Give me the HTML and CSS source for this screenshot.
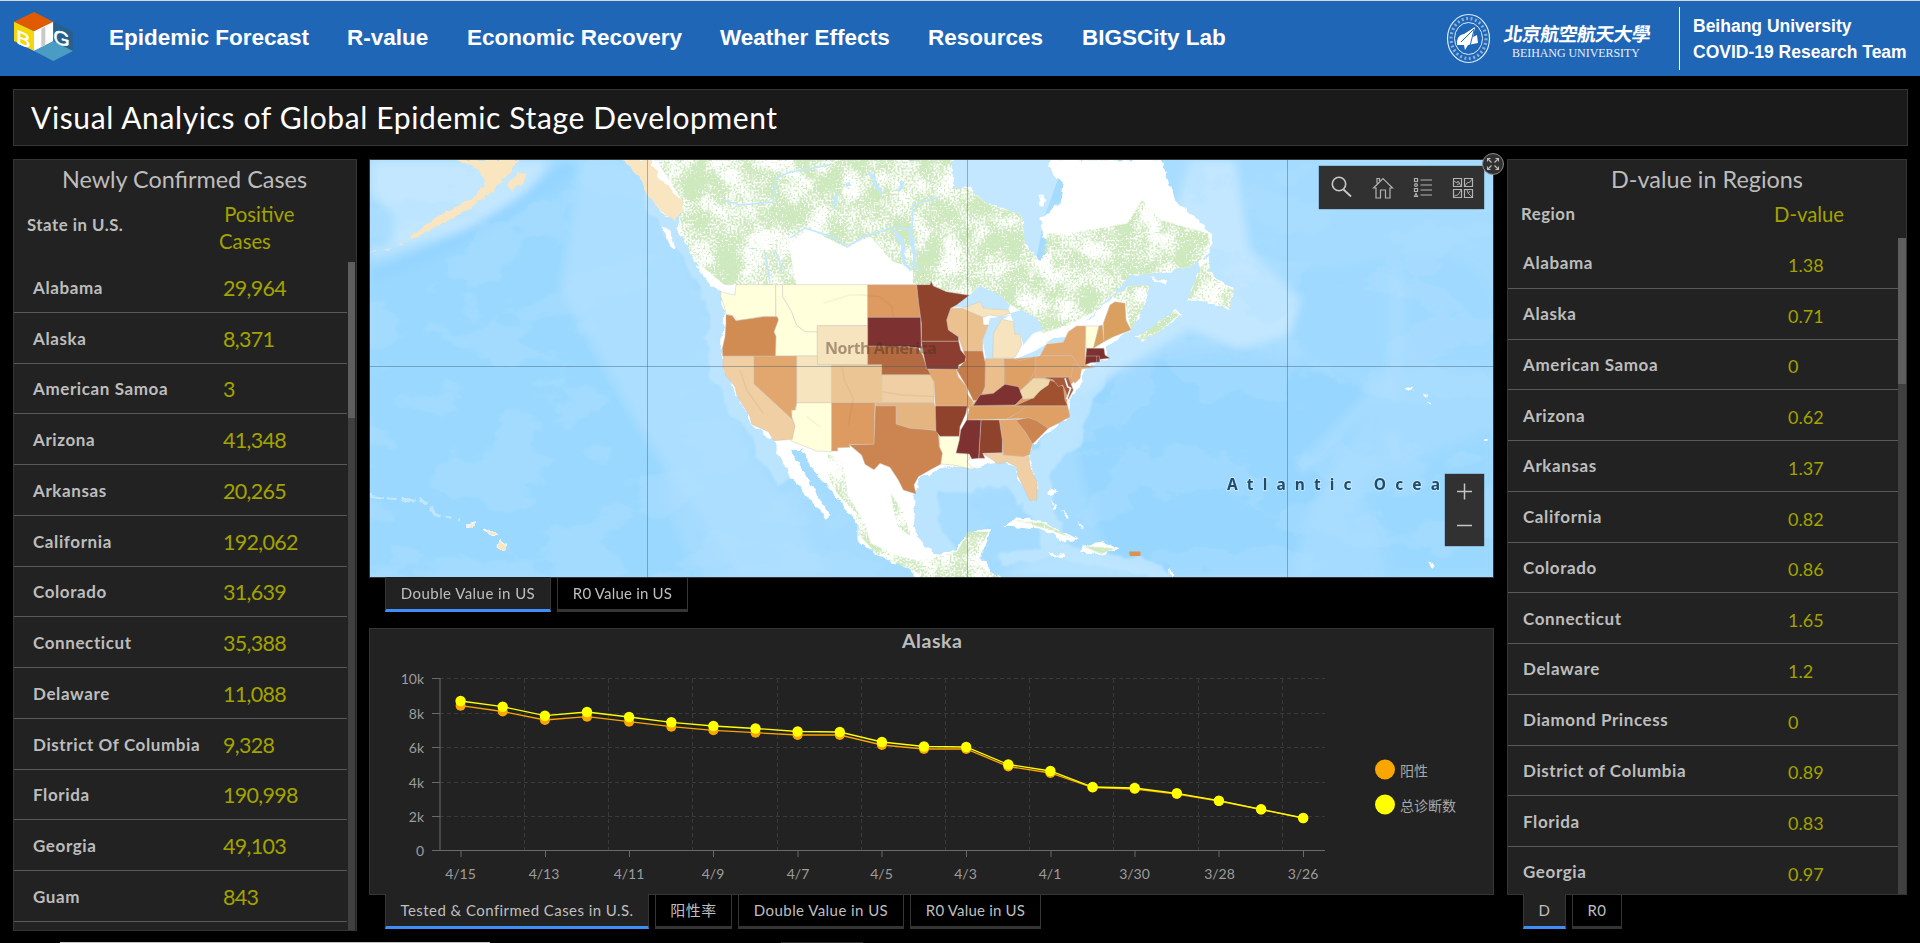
FILE: index.html
```html
<!DOCTYPE html>
<html lang="en">
<head>
<meta charset="utf-8">
<title>Visual Analyics of Global Epidemic Stage Development</title>
<link rel="stylesheet" href="styles.css">
</head>
<body>
<header class="topbar">
  <svg class="logo" viewBox="39 33 183 153" width="61" height="51">
    <path d="M42 65L102 36L160 65L102 94Z" fill="#e25a00"/>
    <path d="M42 65L102 94V153L42 123Z" fill="#f3d60c"/>
    <path d="M102 94L160 65V124L102 153Z" fill="#fff"/>
    <path d="M160 65L219 94V153L160 124Z" fill="#25608f"/>
    <path d="M102 153L160 124L219 153L160 183Z" fill="#4a9cc2"/>
    <path d="M124 86L136 80V134L124 140Z" fill="#c9c9c9"/>
    <text class="cube-letter" transform="matrix(1.1 .45 0 1 49 129)">B</text>
    <text class="cube-letter" transform="matrix(1.1 .3 0 1 160 128)">G</text>
  </svg>
  <nav class="nav">
    <a class="n1">Epidemic Forecast</a><a class="n2">R-value</a><a class="n3">Economic Recovery</a><a class="n4">Weather Effects</a><a class="n5">Resources</a><a class="n6">BIGSCity Lab</a>
  </nav>
  <svg class="university" viewBox="1440 4 230 68" width="230" height="68">
    <g fill="none" stroke="#dcebfa">
      <ellipse cx="1468.500" cy="38.500" rx="21" ry="24" stroke-width="1.200"/>
      <ellipse cx="1468.500" cy="38.500" rx="14" ry="16" stroke-width="1"/>
      <ellipse cx="1468.500" cy="38.500" rx="17.500" ry="20" stroke-width="3.200" stroke-dasharray="2 2.500" opacity=".55"/>
    </g>
    <path d="M1457 41q1-6 7-7l11-7-2 10 4-2 1 8-5 1-5 1-3 5-1-5-7 0Z" fill="#fff"/>
    <path d="M1461 42l13-13M1469 50l5-20" stroke="#1f66b6" stroke-width="1"/>
    <text class="brush" transform="translate(1503 41) skewX(-8)" x="0" y="0" textLength="147">北京航空航天大學</text>
    <text class="roman" x="1512" y="56.500" textLength="128">BEIHANG UNIVERSITY</text>
  </svg>
  <div class="team"><span class="t1">Beihang University</span><span class="t2">COVID-19 Research Team</span></div>
</header>
<section class="banner"><h1>Visual Analyics of Global Epidemic Stage Development</h1></section>
<main class="dash">
  <section class="panel cases">
    <h2>Newly Confirmed Cases</h2>
    <div class="head"><b>State in U.S.</b><span>&nbsp;Positive<br>Cases</span></div>
    <div class="scroll">
      <ul class="rows">
        <li><b>Alabama</b><i>29,964</i></li>
        <li><b>Alaska</b><i>8,371</i></li>
        <li><b>American Samoa</b><i>3</i></li>
        <li><b>Arizona</b><i>41,348</i></li>
        <li><b>Arkansas</b><i>20,265</i></li>
        <li><b>California</b><i>192,062</i></li>
        <li><b>Colorado</b><i>31,639</i></li>
        <li><b>Connecticut</b><i>35,388</i></li>
        <li><b>Delaware</b><i>11,088</i></li>
        <li><b>District Of Columbia</b><i>9,328</i></li>
        <li><b>Florida</b><i>190,998</i></li>
        <li><b>Georgia</b><i>49,103</i></li>
        <li><b>Guam</b><i>843</i></li>
      </ul>
      <div class="track"><div class="thumb"></div></div>
    </div>
  </section>

  <div class="center">
    <section class="map">
      <svg class="mapart" viewBox="370 160 1123 417" width="1123" height="417" preserveAspectRatio="none">
        <defs>
          <filter id="speck" x="0" y="0" width="100%" height="100%">
            <feTurbulence type="fractalNoise" baseFrequency=".5" numOctaves="2" seed="4" result="fine"/>
            <feTurbulence type="fractalNoise" baseFrequency=".035" numOctaves="3" seed="9" result="broad"/>
            <feComposite in="fine" in2="broad" operator="arithmetic" k2=".6" k3=".6"/>
            <feColorMatrix values="0 0 0 0 0 0 0 0 0 0 0 0 0 0 0 8 0 0 0 -3.350" result="n"/>
            <feComposite in="SourceGraphic" in2="n" operator="in"/>
          </filter>
          <filter id="depth" x="0" y="0" width="100%" height="100%">
            <feTurbulence type="fractalNoise" baseFrequency=".013 .02" numOctaves="5" seed="11"/>
            <feColorMatrix values="0 0 0 0 0 0 0 0 0 0 0 0 0 0 0 14 0 0 0 -7.3" result="n"/>
            <feComposite in="SourceGraphic" in2="n" operator="in"/>
          </filter>
          <filter id="rough" x="-5%" y="-5%" width="110%" height="110%">
            <feTurbulence type="fractalNoise" baseFrequency=".12" numOctaves="2" seed="2"/>
            <feDisplacementMap in="SourceGraphic" scale="7" xChannelSelector="R" yChannelSelector="G"/>
          </filter>
          <filter id="soft"><feGaussianBlur stdDeviation="5"/></filter>
          <filter id="edge" x="-5%" y="-5%" width="110%" height="110%">
            <feTurbulence type="fractalNoise" baseFrequency=".04" numOctaves="3" seed="5" result="t"/>
            <feDisplacementMap in="SourceGraphic" in2="t" scale="18" xChannelSelector="R" yChannelSelector="G"/>
            <feGaussianBlur stdDeviation="1.200"/>
          </filter>
        </defs>
        <rect x="370" y="160" width="1123" height="417" fill="#a4dbff"/>
        <g filter="url(#soft)">
          <path d="M370 275Q470 240 560 165L600 160Q570 220 580 260Q620 330 640 370Q700 400 680 440Q640 480 700 577H370Z" fill="#9ad8ff"/>
          <path d="M580 160H650L690 270L725 350L740 430L800 520L830 577H740L640 430L560 290Z" fill="#abdeff"/>
          <path d="M370 160H550Q520 210 480 225Q430 240 370 258Z" fill="#c3e7ff"/>
          <path d="M370 195L395 215L390 245L370 250Z" fill="#a4dbff"/>
          <path d="M370 275Q470 245 570 165" stroke="#92d3ff" stroke-width="9" fill="none"/>
          <path d="M1070 400Q1130 350 1240 350Q1350 370 1380 400Q1320 460 1290 577H1120Q1080 500 1070 400Z" fill="#97d6ff"/>
          <path d="M1290 270Q1340 270 1390 260Q1470 240 1493 300V370Q1420 350 1400 380Q1300 370 1290 330Z" fill="#9fd9ff"/>
          <path d="M1190 160H1235L1250 250L1300 300L1290 335L1240 350L1190 330Q1120 370 1075 400L1080 330L1150 290Z" fill="#c3e7ff"/>
          <path d="M1390 400Q1400 350 1395 260M1300 470Q1340 430 1400 370M1390 430L1405 490" stroke="#b0e0ff" stroke-width="14" fill="none" opacity=".6"/>
          <path d="M1360 480L1493 430V577H1390Z" fill="#9bd8ff"/>
          <path d="M1000 577Q1060 530 1180 580Z" fill="#b5e2ff"/>
        </g>
        <rect x="370" y="160" width="1123" height="417" fill="#b5e2ff" opacity=".32" filter="url(#depth)"/>

        <g filter="url(#edge)" fill="none" stroke="#c3e7ff" stroke-width="28" stroke-linejoin="round" opacity=".75">
          <path d="M655 190L700 260L722 310L722 370L765 440L790 480"/>
          <path d="M1110 340L1085 380L1065 440L1035 465L1040 505L1055 545M1030 500L1015 475L975 472L925 480L922 535L950 565"/>
          <path d="M1000 560L1060 550L1170 575" stroke-width="12"/>
        </g>
        <path d="M940 160H1065L1045 215L1035 265L1022 235L985 215L950 195Z" fill="#c3e7ff"/>
        <path d="M1110 350L1090 330L1100 300L1130 260L1200 250V320L1130 345Z" fill="#c3e7ff"/>

        <g filter="url(#rough)" fill="#fff">
          <path transform="translate(360 150) scale(.3699 .3333)" d="M715 28L755 80L790 150L830 205L870 180L860 240L905 330L945 390L975 430L985 500L978 590L985 660L1020 740L1055 820L1120 872L1130 905L1165 985L1215 1045L1260 1108L1272 1098L1240 1040L1205 975L1165 900L1195 900L1225 960L1290 1040L1345 1120L1345 1170L1400 1215L1500 1265L1568 1290H1700V1230L1590 1225L1525 1190L1495 1130L1500 1030L1510 985L1600 945V28Z"/>
          <path transform="translate(920 150) scale(.3699 .3333)" d="M-20 28H75L85 120L130 115L180 160L275 195L285 290L325 330L345 300L325 205L380 160L385 100L345 50L355 28H650L690 150L755 210L790 260L785 310L730 350L640 370L570 375L540 410L480 480L430 540L520 440L570 405L620 405L600 480L570 540L500 595L510 625L445 655L435 700L410 740L400 800L345 850L300 890L295 930L320 1010L310 1055L270 1000L260 950L220 935L140 955L50 945L-20 975ZM585 560L620 540L690 480L710 495L640 550L600 575ZM760 330L780 320L785 370L845 420L840 480L790 460L720 450L745 390ZM-20 1190L50 1215L100 1200L130 1145L190 1140L160 1230L180 1265L250 1290H-20ZM225 1130L260 1105L330 1115L430 1170L380 1175L340 1140L240 1130ZM440 1185L490 1175L540 1195L490 1215L430 1210ZM350 1213L385 1210L390 1220L360 1222ZM620 378L670 395L660 402L625 388ZM320 130L345 150L330 170Z"/>
          <path transform="translate(360 150) scale(.3699 .3333)" d="M815 230L835 235L855 300L840 290ZM905 345L940 360L985 420L950 405Z"/>
          <path d="M1046 492l10-4 2 4-8 2ZM1052 500l4 8-3 1ZM1062 510l8 8-3 1ZM1078 522l6 5-2 1ZM1170 566l4 10h-3ZM1406 387l8 1-2 3-5-1ZM1424 394l5 1-1 3ZM1426 403l4 1-1 2ZM1427 562l8 3-3 3ZM1484 438l6 2-4 2Z"/>
        </g>

        <g filter="url(#speck)" fill="#cfe9bf">
          <path transform="translate(360 150) scale(.3699 .3333)" d="M800 28H1600V405H1525L1490 350L1440 335L1380 260L1310 290L1210 235L1160 290L1180 405H985L905 330L860 240L870 150Z"/>
          <path transform="translate(920 150) scale(.3699 .3333)" d="M-20 80L130 115L180 160L275 195L285 290L325 330L345 250L400 250L560 220L600 150L650 210L780 250L785 310L730 350L640 370L570 375L540 410L480 480L400 525L330 550L290 495L180 420L130 437L-20 400ZM520 440L570 405L620 405L600 480L570 540L555 460ZM590 560L690 480L700 495L640 550L600 575ZM760 350L780 330L785 370L845 420L840 475L790 460L725 445ZM0 1230L100 1205L130 1145L185 1145L150 1230L180 1265L250 1285H0ZM250 1110L330 1118L420 1168L340 1135ZM440 1188L530 1195L490 1212Z"/>
          <path transform="translate(360 150) scale(.3699 .3333)" d="M1265 910L1305 940L1320 1040L1365 1120L1380 1180L1460 1220L1540 1240L1600 1260L1520 1275L1400 1215L1345 1150L1340 1090L1290 1030L1265 980ZM1435 1030L1470 1090L1490 1160L1450 1130Z"/>
        </g>
        <g fill="none" stroke="#c3e7ff" stroke-width="1.500" stroke-linejoin="round">
          <path d="M723 200L740 205L760 203L773 202L776 178L790 172L830 165M790 238L805 228L835 238L847 247L865 236L895 227L912 230L913 205L940 197"/>
          <path d="M765 252L770 283M775 250L783 270"/>
          <path d="M893 230l8 10 4 25 5 5M910 228l6 42M870 172l5 10 6 12M838 195l-5 12M850 183l-5 3M903 183l-6 8" stroke-width="4" filter="url(#rough)"/>
        </g>

        <g filter="url(#rough)" fill="#fae5c1">
          <path d="M456 160H518L508 175L490 193L475 206L455 216L440 224L428 230L416 237L405 241L420 230L432 220L450 210L470 199L485 185L480 170ZM507 184L518 173L527 174L522 184L512 191ZM398 243l6-1-3 2ZM383 250l8-2-5 3ZM371 251l6-1-4 2Z"/>
          <path d="M624 160H650L658 176L682 200L682 212L675 220L668 218L650 198L640 178Z"/>
          <path stroke="#fff" stroke-width=".8" d="M500 539l8 6-5 6-5-3ZM484 528l12 6-4 3ZM466 525l9-2-2 4Z"/>
        </g>
        <path d="M370 495Q400 500 415 500T435 515L460 520" fill="none" stroke="#c3e7ff" stroke-width="3" stroke-dasharray="14 4 8 6" filter="url(#rough)"/>

        <g class="states" transform="translate(700 270) scale(.33333)">
          <g fill="#c3e7ff">
            <path d="M752 112L808 76L840 48L900 75L930 105L925 120L850 115L842 95L800 112Z"/>
            <path d="M848 210L865 165L870 145L930 135L905 150L882 190L880 265L858 268Z"/>
            <path d="M930 130L965 120L1010 145L1030 180L1000 190L970 225L960 190L945 195L940 155Z"/>
            <path d="M945 268L1000 245L1035 225L1045 232L1010 262L965 272ZM1035 220L1060 205L1097 200L1092 217Z"/>
          </g>
          <path fill="#dfa066" d="M856 268L940 266L1005 262L1115 262L1138 320L1105 350L1100 407L985 412L808 412L838 380Z"/>
          <g fill="#ffffdb">
            <path d="M62 62L70 68L105 75L108 44H227V139L190 139L140 148L115 152L100 137L78 132L72 105L62 80Z"/>
            <path d="M227 44H248V80L275 125L290 165L315 185H352V258H226L228 200L222 185L235 150L228 139Z"/>
            <path d="M248 44H503V167H352V185H315L290 165L275 125L248 80Z"/>
            <path d="M290 398H395V545L350 543L272 512L285 468L274 440L276 420H288Z"/>
            <path d="M718 499H778L782 520L770 550L808 552V566L800 575L822 598L790 592L760 585L722 582L727 550L718 530Z"/>
            <path d="M1157 168H1197L1190 200L1180 235H1158Z"/>
          </g>
          <g fill="#f6e4bf">
            <path d="M352 167H503V284H352Z"/><path d="M290 258H352V284H395V398H290Z"/>
            <path d="M878 265L880 190L905 148L940 155L945 195L960 190L965 225L945 262ZM770 118L800 110L842 95L850 115L925 120L930 130L900 140L870 135L850 142Z"/>
          </g>
          <g fill="#efcfa3">
            <path d="M70 258H162V342L278 447L285 468L277 508L222 512L205 485L155 463L150 440L110 375L105 350L78 318L68 290Z"/>
            <path d="M545 314H692L702 335V398H545Z"/>
            <path fill="#ecc594" d="M395 284H545V398H395Z"/>
            <path d="M850 552L907 550L975 560L986 558L990 590L1012 640L1010 690L990 692L955 620L950 590L920 575L895 582L870 565Z"/>
            <path fill="#ebc190" d="M752 115L785 115L848 142L850 165L865 165L848 210V243H790L775 200L745 180L740 150Z"/>
            <path fill="#eabf8d" d="M856 266H912V345L880 370L845 372L855 340Z"/>
          </g>
          <g fill="#e2a76e">
            <path d="M162 258H290V398L285 420H274L276 447L162 342Z"/>
            <path fill="#e5b581" d="M526 398H702L708 425V481L670 478L630 475L588 462V408H526Z"/>
            <path d="M680 298L768 296L775 320L800 350L802 372L820 395L810 420L798 408H706L702 335Z"/>
            <path d="M898 450L950 448L975 485L998 520L988 555L970 560L910 555L907 510Z"/>
            <path d="M1005 262L1020 257H1115L1140 285L1120 320L1005 322Z"/>
            <path d="M1020 257L1040 222L1090 217L1105 185L1130 168H1157L1155 285L1183 292L1145 297L1115 257Z"/>
            <path d="M1122 280L1145 295L1140 325L1125 340L1112 320Z"/>
            <path fill="#dd9f62" d="M810 408H985L955 430L920 447L800 450Z"/>
            <path fill="#dfa066" d="M980 408H1103L1110 440L1075 460L1045 475L1010 455L985 445L920 447L955 428Z"/>
            <path fill="#dfa066" d="M912 266H940L960 272L1005 260V300L985 340L960 362L915 343Z"/>
            <path fill="#d9a060" d="M1197 168L1207 165L1212 215L1180 235ZM1210 160L1230 105L1245 95L1275 100L1278 150L1293 180L1240 200L1212 215Z"/>
            <path fill="#dd9a61" d="M503 44H650L656 80L662 142H503Z"/>
            <path fill="#dd9a61" d="M395 398H525L522 523H448L450 532L413 533V543H395Z"/>
          </g>
          <g fill="#cc8550">
            <path fill="#d18c53" d="M78 134L97 137L108 152L160 145L190 140H232L235 150L222 185L228 200L226 258H68L67 235L75 200L78 160Z"/>
            <path d="M526 408H588V462L630 475L670 478L715 482L718 530L727 550L722 583L690 600L655 620L642 645L648 672L610 660L595 630L570 592L540 580L522 599L495 583L485 555L448 524L522 523Z"/>
            <path d="M948 450L985 443L1010 452L1045 475L1020 500L998 522L975 485Z"/>
            <path fill="#c57c4b" d="M790 243H848L856 280L855 350L838 390L820 392L800 350L770 300L798 270Z"/>
            <path fill="#b56b42" d="M503 228H600L655 235L668 255L680 290L692 314H545V284H503Z"/>
          </g>
          <g fill="#8f432d">
            <path d="M650 44H690L693 33L700 48L740 65L808 76L770 105L752 115L740 150L745 180L775 200L776 214H664V160L656 100Z"/>
            <path fill="#8b3d31" d="M664 214H776L782 240L798 260L795 275L776 285L775 298L680 297L672 260Z"/>
            <path d="M706 408H802L798 430L780 470L778 499H720L708 484Z"/>
            <path d="M843 450H898L907 510V548L848 550L855 565H836Z"/>
            <path fill="#a05130" d="M945 407L990 388L1020 362L1045 330L1065 335L1090 350L1095 390L1103 407Z"/>
            <path fill="#a9593a" d="M1030 322H1105L1120 360L1105 388L1095 360L1088 345L1075 350L1060 330Z"/>
          </g>
          <g fill="#7e3131">
            <path d="M503 142H662L664 235L625 230L503 228Z"/>
            <path d="M800 450H843L836 565L815 567L808 552L768 549L778 510L782 480Z"/>
            <path d="M820 407L840 375L880 370L915 343L955 350L970 380L945 405Z"/>
            <path d="M1160 235H1212L1215 255L1230 265L1200 268V276L1172 278L1155 285Z"/>
          </g>
          <path fill="#efd9ab" d="M960 362L985 340L1000 325L1030 325L1050 330L1045 345L1020 362L1000 385L970 388Z"/>
          <path class="border" d="M1155 258H1198V276M1190 258V278"/>
          <path class="bay" d="M1095 325L1103 350L1112 355L1100 388"/>
          <path class="river" d="M425 290l10 45 25 50-15 80M480 75l60 5 35 30 10 60 40 60M120 300l20 60 50 70M370 100l80-25 50 0M545 365l60 10 100 5M320 440l40 30"/>
        </g>
        <path d="M1129 551.500h11.500v4.500h-10.500Z" fill="#da9152"/>
        <text class="continent" x="825" y="354" textLength="112">North America</text>
        <text class="ocean" x="1227" y="490" textLength="213">Atlantic Ocea</text>
        <path d="M647.500 160V577M967.500 160V577M1287.500 160V577M370 366.500H1493" stroke="#335566" stroke-opacity=".4" stroke-width="1" fill="none"/>
      </svg>
      <div class="tools">
        <svg viewBox="1319 166 165 43" width="165" height="43" fill="none" stroke="#c9c9c9">
          <circle cx="1339" cy="184" r="6.700" stroke-width="1.600"/><path d="M1343.500 189.500l7.500 7" stroke-width="1.800"/>
          <g stroke="#b4b4b4" stroke-width="1.200"><path d="M1373.500 188l9.500-9.500 9.500 9.500h-2.500v10h-4.500v-8h-5v8h-4.500v-10ZM1377 183.500v-5h2.500v2.500"/>
          <path d="M1420.500 180h11.500M1420.500 185h11.500M1420.500 190h11.500M1420.500 195h11.500"/>
          <path d="M1414.500 178.500h3v3h-3ZM1414.500 188.500h3v3h-3ZM1416 193.500l1.500 3h-3Z"/><circle cx="1416" cy="185" r="1.400"/>
          <path d="M1453.500 178.500h8v8h-8ZM1464.500 178.500h8v8h-8ZM1453.500 189.500h8v8h-8ZM1464.500 189.500h8v8h-8Z"/>
          <path stroke-width=".9" d="M1454 181l3 2 1-2 3 5M1457 185l3-2M1465 186l2-3 3-1 2-3M1454 196l4-1 3-5M1467 190l1 3 4 4M1470 191l-2 3"/></g>
        </svg>
      </div>
      <div class="zoomer"><svg viewBox="0 0 39 72" width="39" height="72"><path d="M12 17.500h15M19.500 9.500v16M12 51.500h15" stroke="#c4c4c4" stroke-width="1.500"/></svg></div>
      <div class="expand"><svg viewBox="0 0 24 24" width="24" height="24" fill="none"><circle cx="12" cy="12" r="10.500" fill="#303030" stroke="#8a8a8a"/><path d="M6.500 9.500v-3h3M6.500 6.500l4 4M17.500 9.500v-3h-3M17.500 6.500l-4 4M6.500 14.500v3h3M6.500 17.500l4-4M17.500 14.500v3h-3M17.500 17.500l-4-4" stroke="#bbb" stroke-width="1.100"/></svg></div>
    </section>
    <div class="tabs"><span class="tab on w166">Double Value in US</span><span class="tab w131">R0 Value in US</span></div>
    <section class="chartbox">
      <svg class="chart" viewBox="370 629 1123 265" width="1123" height="265">
        <text class="ctitle" x="932" y="647.500" text-anchor="middle" textLength="60">Alaska</text>
        <path class="grid" d="M440 678.500H1325M440 713.500H1325M440 747.500H1325M440 782.500H1325M440 816.500H1325M524.500 679V850M608.500 679V850M692.500 679V850M777.500 679V850M861.500 679V850M945.500 679V850M1029.500 679V850M1113.500 679V850M1198.500 679V850M1282.500 679V850"/>
        <path class="axis" d="M440 678V851M432 678.500h8M432 713.500h8M432 747.500h8M432 782.500h8M432 816.500h8M432 850.500H1325M461 851v6M545.500 851v6M629.500 851v6M713.500 851v6M798 851v6M882 851v6M966.500 851v6M1051 851v6M1135 851v6M1219 851v6M1303.500 851v6"/>
        <g class="lab" text-anchor="end"><text x="424" y="684">10k</text><text x="424" y="719">8k</text><text x="424" y="753">6k</text><text x="424" y="788">4k</text><text x="424" y="822">2k</text><text x="424" y="856">0</text></g>
        <g class="lab" text-anchor="middle"><text x="460.500" y="879">4/15</text><text x="544" y="879">4/13</text><text x="629" y="879">4/11</text><text x="713" y="879">4/9</text><text x="798" y="879">4/7</text><text x="881.500" y="879">4/5</text><text x="965.500" y="879">4/3</text><text x="1050" y="879">4/1</text><text x="1134.500" y="879">3/30</text><text x="1219.500" y="879">3/28</text><text x="1303" y="879">3/26</text></g>
        <defs>
          <marker id="om" markerUnits="userSpaceOnUse" markerWidth="12" markerHeight="12" refX="6" refY="6"><circle cx="6" cy="6" r="5" fill="#faa600"/></marker>
          <marker id="ym" markerUnits="userSpaceOnUse" markerWidth="12" markerHeight="12" refX="6" refY="6"><circle cx="6" cy="6" r="5.200" fill="#ff0"/></marker>
        </defs>
        <polyline class="series pos" points="460.600,705.700 502.700,711.500 544.900,720 587,716.700 629.100,721.700 671.300,726.700 713.400,730.300 755.500,732.700 797.600,735 839.800,735 881.900,745 924,749 966.200,749 1008.300,766.500 1050.400,773 1092.600,787.500 1134.700,789 1176.800,794 1218.900,801 1261.100,809.500 1303.200,818.200"/>
        <polyline class="series tot" points="460.600,701 502.700,706.700 544.900,715.700 587,712 629.100,717 671.300,722.300 713.400,726 755.500,728.500 797.600,731.500 839.800,732 881.900,742 924,746.500 966.200,747 1008.300,764.500 1050.400,771 1092.600,787 1134.700,788 1176.800,793.300 1218.900,800.700 1261.100,809.300 1303.200,818"/>
        <circle cx="1385" cy="769.500" r="10" fill="#faa600"/><circle cx="1385" cy="804.500" r="10" fill="#ff0"/>
        <text class="leg" x="1400" y="776" textLength="28">阳性</text><text class="leg" x="1400" y="811" textLength="56">总诊断数</text>
      </svg>
    </section>
    <div class="tabs"><span class="tab on w264">Tested &amp; Confirmed Cases in U.S.</span><span class="tab w77">阳性率</span><span class="tab w166">Double Value in US</span><span class="tab w131">R0 Value in US</span></div>
  </div>

  <div class="right">
    <section class="panel dvals">
      <h2>D-value in Regions</h2>
      <div class="head"><b>Region</b><span>D-value</span></div>
      <div class="scroll">
        <ul class="rows">
          <li><b>Alabama</b><i>1.38</i></li>
          <li><b>Alaska</b><i>0.71</i></li>
          <li><b>American Samoa</b><i>0</i></li>
          <li><b>Arizona</b><i>0.62</i></li>
          <li><b>Arkansas</b><i>1.37</i></li>
          <li><b>California</b><i>0.82</i></li>
          <li><b>Colorado</b><i>0.86</i></li>
          <li><b>Connecticut</b><i>1.65</i></li>
          <li><b>Delaware</b><i>1.2</i></li>
          <li><b>Diamond Princess</b><i>0</i></li>
          <li><b>District of Columbia</b><i>0.89</i></li>
          <li><b>Florida</b><i>0.83</i></li>
          <li><b>Georgia</b><i>0.97</i></li>
        </ul>
        <div class="track"><div class="thumb"></div></div>
      </div>
    </section>
    <div class="tabs"><span class="tab on w43">D</span><span class="tab w50">R0</span></div>
  </div>
</main>
<footer class="edge"><i class="e1"></i><i class="e2"></i></footer>
</body>
</html>
```

FILE: styles.css
```css
* { box-sizing: border-box; }
html, body { margin: 0; height: 943px; overflow: hidden; background: #000; }
body { display: flex; flex-direction: column; font-family: Lato, "Noto Sans CJK SC", sans-serif; color: #bdbdbd; }
h1, h2, ul { margin: 0; padding: 0; font-weight: 400; list-style: none; }

.topbar { flex: none; height: 76px; display: flex; align-items: flex-start; background: #1f66b6; border-top: 1px solid #d5d9de; color: #fff; font-family: "Liberation Sans", Arial, sans-serif; font-weight: 700; }
.logo { margin: 10px 0 0 13px; }
.cube-letter { font: 400 58px "Liberation Sans", sans-serif; fill: #fff; stroke: #fff; stroke-width: 1.5px; }
.nav { margin: 23px 0 0 35px; display: flex; width: 1332px; font-size: 22.5px; line-height: 28px; white-space: nowrap; }
.nav a { display: block; }
.n1 { width: 238px; } .n2 { width: 120px; } .n3 { width: 253px; } .n4 { width: 208px; } .n5 { width: 154px; }
.university { flex: none; margin-top: 3px; margin-left: -1px; }
.brush { font: 700 19px "Noto Sans CJK TC", sans-serif; fill: #fff; }
.roman { font: 400 12px "Liberation Serif", serif; fill: #e6f0fa; }
.team { flex: none; margin-top: 6px; margin-left: 9px; height: 63px; padding: 6px 0 0 13px; border-left: 1px solid #fff; display: flex; flex-direction: column; font-size: 17.5px; line-height: 26px; white-space: nowrap; }

.banner { flex: none; margin: 13px 12px 0 13px; height: 57px; background: #1a1a1a; border: 1px solid #353535; padding-left: 17px; }
.banner h1 { font-size: 30px; letter-spacing: .62px; line-height: 54px; color: #fff; white-space: nowrap; }

.dash { flex: none; margin: 13px 12px 0 13px; height: 772px; display: grid; grid-template-columns: 345px 1125px 401px; column-gap: 11px; align-items: start; }
.right { margin-left: 2px; }
.panel { background: #222; border: 1px solid #353535; overflow: hidden; }
.cases { width: 344px; height: 772px; padding-right: 1px; }
.dvals { width: 400px; height: 736px; }
.panel h2 { height: 40px; text-align: center; font-size: 23.4px; line-height: 38px; white-space: nowrap; }
.head { display: flex; white-space: nowrap; font-size: 17px; }
.head b { line-height: 28px; letter-spacing: .5px; font-size: 16.8px; }
.head span { color: #a3a300; font-size: 20.3px; line-height: 27px; padding-top: 1px; }
.cases .head { height: 62px; padding-left: 13px; }
.cases .head b { width: 192px; margin-top: 11px; }
.dvals .head { height: 38px; padding-left: 13px; }
.dvals .head b { width: 253px; }
.scroll { display: flex; }
.rows { flex: 1; }
.rows li { height: 50.750px; border-bottom: 1px solid #595959; display: flex; align-items: center; white-space: nowrap; padding-top: 1px; }
.rows b { font-size: 17px; letter-spacing: .6px; }
.rows i { font-style: normal; color: #a3a300; font-size: 21.5px; letter-spacing: -.7px; padding-top: 1px; }
.cases .rows { margin-right: 1px; }
.cases .rows li { padding-left: 19px; }
.cases .rows b { width: 190px; }
.dvals .rows li { padding: 0 0 0 15px; }
.dvals .rows b { width: 265px; }
.dvals .rows i { font-size: 18px; letter-spacing: 0; padding-top: 4px; }
.track { background: #404040; }
.cases .track { width: 7px; height: 670px; }
.cases .thumb { height: 156px; background: #5e5e5e; }
.dvals .track { width: 8px; height: 660px; }
.dvals .thumb { height: 146px; background: #5e5e5e; }

.map { position: relative; height: 419px; border: 1px solid #353535; }
.mapart { display: block; }
.states path { stroke: #c9c3bb; stroke-opacity: .7; stroke-width: 2px; stroke-linejoin: round; }
.states g:first-child path { stroke: none; }
.states .river { fill: none; stroke: #50503c; stroke-opacity: .07; stroke-width: 4px; }
.states .bay { fill: none; stroke: #e8f5ff; stroke-opacity: 1; stroke-width: 5px; }
.states .border { fill: none; }
.continent { font: 700 16px "Open Sans", sans-serif; fill: #4a3018; opacity: .45; }
.ocean { font: 700 15.5px "Noto Sans", sans-serif; fill: #1d4d6d; stroke: #ffffff88; stroke-width: 1.5px; paint-order: stroke; }
.tools, .zoomer { position: absolute; background: #313131; box-shadow: 0 0 1px #222; }
.tools { top: 6px; right: 9px; width: 165px; height: 43px; }
.zoomer { right: 9px; bottom: 31px; width: 39px; height: 72px; }
.expand { position: absolute; right: -12px; top: -8px; width: 24px; height: 24px; }

.tabs { display: flex; gap: 6px; padding-left: 16px; height: 34px; margin-top: -1px; position: relative; }
.tab { border: 1px solid #353535; border-top: 0; border-bottom: 3px solid #353535; font-size: 15px; letter-spacing: .44px; line-height: 33px; text-align: center; color: #bfbfbf; white-space: nowrap; height: 35px; }
.on { background: #222; border-bottom-color: #3e8ef7; }
.w166 { width: 166px; } .w131 { width: 131px; letter-spacing: .2px; } .w264 { width: 264px; } .w77 { width: 77px; } .w43 { width: 43px; } .w50 { width: 50px; }
.chartbox { margin-top: 17px; height: 267px; background: #222; border: 1px solid #353535; }
.chart { display: block; }
.ctitle { font: 700 19.5px Lato, sans-serif; fill: #bdbdbd; }
.grid { stroke: #3a3a3a; stroke-dasharray: 4 3; fill: none; }
.axis { stroke: #6a6a6a; fill: none; }
.lab { font: 400 14px Lato, sans-serif; fill: #9d9d9d; }
.series { fill: none; stroke-width: 1.300px; }
.pos { stroke: #faa600; marker: url(#om); }
.tot { stroke: #ff0; marker: url(#ym); }
.leg { font: 400 14px "Noto Sans CJK SC", sans-serif; fill: #a8a8a8; }

.edge { flex: none; margin-top: 11px; height: 1px; display: flex; padding-left: 60px; gap: 291px; }
.e1 { width: 430px; background: #c4c4c4; }
.e2 { width: 82px; background: #2e2e2e; }
```
